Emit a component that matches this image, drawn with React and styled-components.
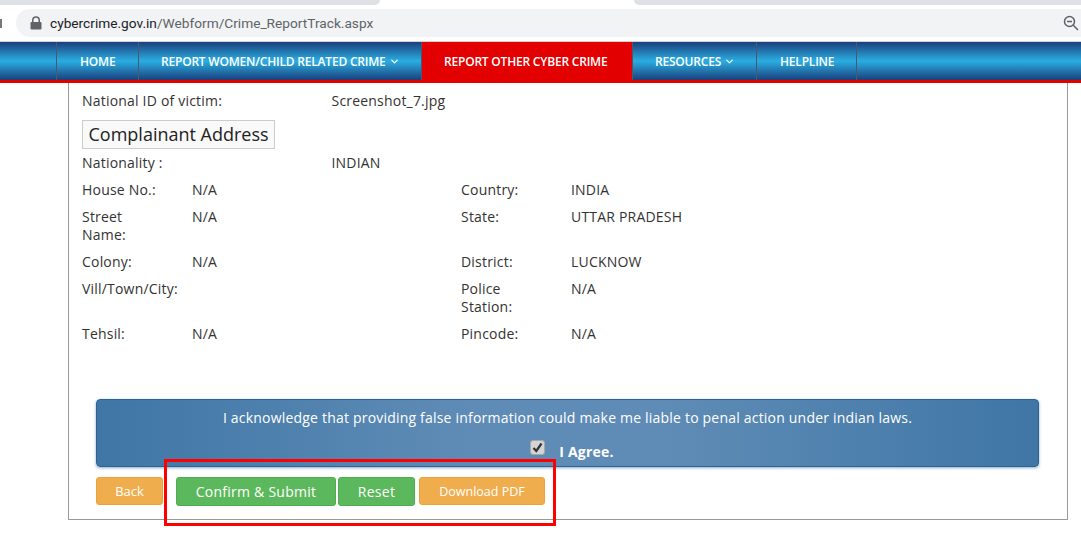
import React from "react";
import styled, { createGlobalStyle } from "styled-components";
import { ChevronDown } from "lucide-react";

const GlobalStyle = createGlobalStyle`
	html, body {
		margin: 0;
		padding: 0;
		background: #fff;
		font-family: "Open Sans", "Noto Sans", sans-serif;
		font-size: 14px;
		color: #333;
		overflow: hidden;
	}
`;

const Page = styled.div`
	position: relative;
	width: 1081px;
	height: 548px;
	overflow: hidden;
`;

const TabStrip = styled.div`
	display: flex;
	justify-content: space-between;
	height: 5px;
	margin-bottom: 4px;
`;

const Tab = styled.div`
	width: ${(p) => p.$width}px;
	background: #dee1e6;
	border-radius: ${(p) => (p.$side === "left" ? "0 0 8px 0" : "0 0 0 8px")};
`;

const Toolbar = styled.div`
	display: flex;
	align-items: center;
	height: 33px;
	border-bottom: 1px solid #d0d2d5;
	box-sizing: border-box;
	padding-bottom: 4px;
`;

const Reload = styled.div`
	width: 2px;
	height: 9px;
	margin-right: 14px;
	background: #777;
`;

const AddressBar = styled.div`
	flex: 1;
	display: flex;
	align-items: center;
	justify-content: space-between;
	height: 28px;
	padding: 0 2px 0 14px;
	background: #f1f3f4;
	border-radius: 14px 0 0 14px;
`;

const Url = styled.div`
	display: flex;
	align-items: center;
	gap: 8px;
	font-family: "Roboto", "Noto Sans", sans-serif;
	font-size: 13.7px;
	color: #5f6368;

	b {
		font-weight: 400;
		color: #202124;
	}
`;

const Nav = styled.nav`
	display: flex;
	height: 38px;
	padding-left: 56px;
	border-bottom: 3px solid #e30000;
	background: linear-gradient(to bottom, #1b3f7c 0%, #2aaee2 50%, #1b3f7c 100%);
`;

const NavItem = styled.a`
	display: flex;
	align-items: center;
	gap: 3px;
	box-sizing: border-box;
	width: ${(p) => p.$width}px;
	padding-left: ${(p) => p.$pad || 22}px;
	border-left: 1px solid #4a5a6e;
	border-right: ${(p) => (p.$last ? "1px solid #4a5a6e" : "none")};
	background: ${(p) => (p.$active ? "#e30000" : "transparent")};
	color: #fff;
	font-size: 12px;
	font-weight: 600;
	letter-spacing: -0.2px;
	white-space: nowrap;
`;

const Panel = styled.div`
	box-sizing: border-box;
	width: 1000px;
	height: 437px;
	margin-left: 68px;
	padding: 9px 13px 0;
	border: 1px solid #999;
	border-top: none;
	letter-spacing: 0.2px;
`;

const InfoRow = styled.div`
	display: grid;
	grid-template-columns: ${(p) => (p.$wide ? "249.5px 1fr" : "110px 269px 110px 1fr")};
	margin-bottom: 9px;
	line-height: 18px;
`;

const SectionTitle = styled.div`
	display: inline-block;
	margin: 1px 0 5px;
	padding: 0 5.5px;
	border: 1px solid #ccc;
	background: #f9f9f9;
	font-size: 18px;
	line-height: 27px;
	letter-spacing: 0;
	color: #222;
`;

const Notice = styled.div`
	box-sizing: border-box;
	width: 943px;
	height: 68px;
	margin: 56px 0 0 14px;
	padding-top: 9px;
	border: 1px solid #2a6496;
	border-radius: 4px;
	background: linear-gradient(to right, #3f76a6 0%, #5f8cb6 40%, #5f8cb6 60%, #3f76a6 100%);
	box-shadow: 0 1px 3px rgba(66, 115, 160, 0.6);
	color: #fff;
	text-align: center;
	line-height: 18px;
`;

const AgreeRow = styled.div`
	display: flex;
	justify-content: center;
	align-items: flex-start;
	gap: 14px;
	margin-top: 13px;
	padding-left: 9px;
	font-weight: 700;
`;

const AgreeBox = styled.span`
	display: flex;
	align-items: center;
	justify-content: center;
	box-sizing: border-box;
	width: 15px;
	height: 15px;
	border: 1px solid #a8a8a8;
	border-radius: 3px;
	background: #d4d4d4;
`;

const AgreeLabel = styled.span`
	margin-top: 3px;
`;

const Buttons = styled.div`
	display: flex;
	align-items: flex-start;
	margin: 10px 0 0 14px;
`;

const Button = styled.button`
	box-sizing: border-box;
	width: ${(p) => p.$width}px;
	height: ${(p) => (p.$green ? 29 : 28)}px;
	margin-left: ${(p) => p.$gap || 0}px;
	padding: 0;
	border: 1px solid ${(p) => (p.$green ? "#4cae4c" : "#eea236")};
	border-radius: 3px;
	background: ${(p) => (p.$green ? "#5cb85c" : "#f0ad4e")};
	color: #fff;
	font-family: inherit;
	font-size: ${(p) => p.$size || 14}px;
	letter-spacing: ${(p) => (p.$green ? "0.25px" : "0")};
`;

const Highlight = styled.div`
	position: absolute;
	left: 164px;
	top: 459px;
	width: 392px;
	height: 67px;
	box-sizing: border-box;
	border: 3px solid #f00;
`;

const App = () => {
	return (
		<Page>
			<GlobalStyle />
			<TabStrip>
				<Tab $width={380} $side="left" />
				<Tab $width={447} $side="right" />
			</TabStrip>
			<Toolbar>
				<Reload />
				<AddressBar>
					<Url>
						<svg width="12" height="14" viewBox="0 0 12 14">
							<path
								d="M2 6V4.200a4 4 0 0 1 8 0V6h.6c.5 0 .9.4.9.9v5.600c0 .5-.4.9-.9.9H1.400c-.5 0-.9-.4-.9-.9V6.900c0-.5.4-.9.9-.9H2zm1.500 0h5V4.200a2.500 2.500 0 0 0-5 0V6z"
								fill="#5f6368"
							/>
						</svg>
						<span>
							<b>cybercrime.gov.in</b>/Webform/Crime_ReportTrack.aspx
						</span>
					</Url>
					<svg width="16" height="16" viewBox="0 0 16 16" fill="none" stroke="#5f6368" strokeWidth="1.5">
						<circle cx="6.500" cy="6.500" r="5" />
						<path d="M4 6.500h5M10.300 10.300L15 15" />
					</svg>
				</AddressBar>
			</Toolbar>
			<Nav>
				<NavItem $width={82} $pad={23}>HOME</NavItem>
				<NavItem $width={283}>
					REPORT WOMEN/CHILD RELATED CRIME <ChevronDown size={11} strokeWidth={2.6} />
				</NavItem>
				<NavItem $width={211} $active>
					REPORT OTHER CYBER CRIME
				</NavItem>
				<NavItem $width={124}>
					RESOURCES <ChevronDown size={11} strokeWidth={2.6} />
				</NavItem>
				<NavItem $width={101} $pad={23} $last>
					HELPLINE
				</NavItem>
			</Nav>
			<Panel>
				<InfoRow $wide>
					<span>National ID of victim:</span>
					<span>Screenshot_7.jpg</span>
				</InfoRow>
				<SectionTitle>Complainant Address</SectionTitle>
				<InfoRow $wide>
					<span>Nationality :</span>
					<span>INDIAN</span>
				</InfoRow>
				<InfoRow>
					<span>House No.:</span>
					<span>N/A</span>
					<span>Country:</span>
					<span>INDIA</span>
				</InfoRow>
				<InfoRow>
					<span>
						Street
						<br />
						Name:
					</span>
					<span>N/A</span>
					<span>State:</span>
					<span>UTTAR PRADESH</span>
				</InfoRow>
				<InfoRow>
					<span>Colony:</span>
					<span>N/A</span>
					<span>District:</span>
					<span>LUCKNOW</span>
				</InfoRow>
				<InfoRow>
					<span>Vill/Town/City:</span>
					<span />
					<span>
						Police
						<br />
						Station:
					</span>
					<span>N/A</span>
				</InfoRow>
				<InfoRow>
					<span>Tehsil:</span>
					<span>N/A</span>
					<span>Pincode:</span>
					<span>N/A</span>
				</InfoRow>
				<Notice>
					I acknowledge that providing false information could make me liable to penal action under indian laws.
					<AgreeRow>
						<AgreeBox>
							<svg width="11" height="11" viewBox="0 0 11 11" fill="none" stroke="#333" strokeWidth="2.2">
								<path d="M1.500 6l2.800 3L9.500 1.500" />
							</svg>
						</AgreeBox>
						<AgreeLabel>I Agree.</AgreeLabel>
					</AgreeRow>
				</Notice>
				<Buttons>
					<Button $width={67} $size={13}>Back</Button>
					<Button $width={160} $gap={13} $green>Confirm &amp; Submit</Button>
					<Button $width={77} $gap={2} $green>Reset</Button>
					<Button $width={126} $gap={4} $size={12.5}>Download PDF</Button>
				</Buttons>
			</Panel>
			<Highlight />
		</Page>
	);
};

export default App;
